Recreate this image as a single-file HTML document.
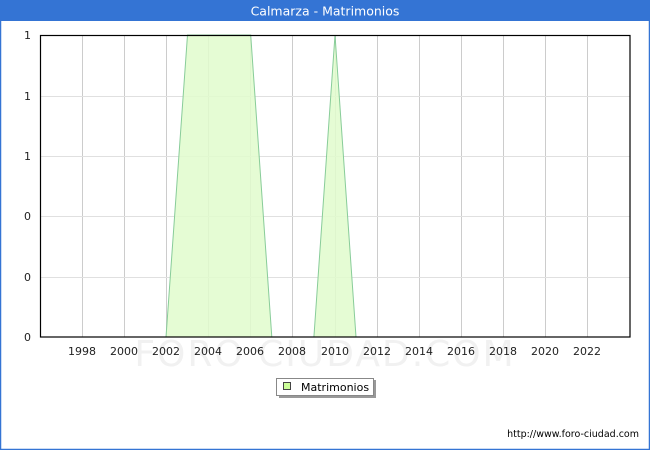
<!DOCTYPE html>
<html><head><meta charset="utf-8"><style>
html,body{margin:0;padding:0;background:#fff;}
svg{display:block;font-family:"DejaVu Sans","Liberation Sans",sans-serif;}
</style></head><body>
<svg width="650" height="450" viewBox="0 0 650 450">
<rect x="0" y="0" width="650" height="450" fill="#fff"/>
<rect x="0.5" y="0.5" width="649" height="449" fill="none" stroke="#3474d4" stroke-width="1.5"/>
<rect x="0" y="0" width="650" height="21" fill="#3474d4"/>
<text x="325" y="15.5" fill="#fff" font-size="12.5" text-anchor="middle">Calmarza - Matrimonios</text>
<text x="325" y="366" fill="#f1f1f1" font-size="36" text-anchor="middle" letter-spacing="2">FORO CIUDAD.COM</text>
<g stroke="#cccccc" stroke-width="1">
<line x1="82.5" y1="35" x2="82.5" y2="337"/><line x1="124.5" y1="35" x2="124.5" y2="337"/>
<line x1="166.5" y1="35" x2="166.5" y2="337"/><line x1="208.5" y1="35" x2="208.5" y2="337"/>
<line x1="250.5" y1="35" x2="250.5" y2="337"/><line x1="292.5" y1="35" x2="292.5" y2="337"/>
<line x1="335.5" y1="35" x2="335.5" y2="337"/><line x1="377.5" y1="35" x2="377.5" y2="337"/>
<line x1="419.5" y1="35" x2="419.5" y2="337"/><line x1="461.5" y1="35" x2="461.5" y2="337"/>
<line x1="503.5" y1="35" x2="503.5" y2="337"/><line x1="545.5" y1="35" x2="545.5" y2="337"/>
<line x1="587.5" y1="35" x2="587.5" y2="337"/>
</g>
<g stroke="#e0e0e0" stroke-width="1">
<line x1="40" y1="96.5" x2="630" y2="96.5"/><line x1="40" y1="156.5" x2="630" y2="156.5"/>
<line x1="40" y1="216.5" x2="630" y2="216.5"/><line x1="40" y1="277.5" x2="630" y2="277.5"/>
</g>
<polygon points="166,337 187.5,35 250.7,35 271.8,337" fill="#e0fccc" fill-opacity="0.85" stroke="#88cc99" stroke-width="1"/>
<polygon points="313.9,337 335,35 356,337" fill="#e0fccc" fill-opacity="0.85" stroke="#88cc99" stroke-width="1"/>
<rect x="40.5" y="35.5" width="589.5" height="301.5" fill="none" stroke="#000" stroke-width="1.2"/>
<g font-size="11" fill="#222" text-anchor="end">
<text x="31" y="39">1</text><text x="31" y="100">1</text><text x="31" y="160">1</text>
<text x="31" y="220">0</text><text x="31" y="281">0</text><text x="31" y="341">0</text>
</g>
<g font-size="11" fill="#222" text-anchor="middle">
<text x="82" y="355">1998</text><text x="124" y="355">2000</text><text x="166" y="355">2002</text>
<text x="208" y="355">2004</text><text x="250" y="355">2006</text><text x="292" y="355">2008</text>
<text x="335" y="355">2010</text><text x="377" y="355">2012</text><text x="419" y="355">2014</text>
<text x="461" y="355">2016</text><text x="503" y="355">2018</text><text x="545" y="355">2020</text>
<text x="587" y="355">2022</text>
</g>
<rect x="279" y="380" width="97" height="18" fill="#999"/>
<rect x="276.5" y="378.5" width="97" height="17" fill="#fff" stroke="#888" stroke-width="1"/>
<rect x="283.5" y="382.5" width="7" height="7" fill="#ccff99" stroke="#444" stroke-width="1"/>
<text x="301" y="391" font-size="11" fill="#000">Matrimonios</text>
<text x="639" y="437" font-size="9.5" fill="#000" text-anchor="end">http://www.foro-ciudad.com</text>
</svg>
</body></html>
